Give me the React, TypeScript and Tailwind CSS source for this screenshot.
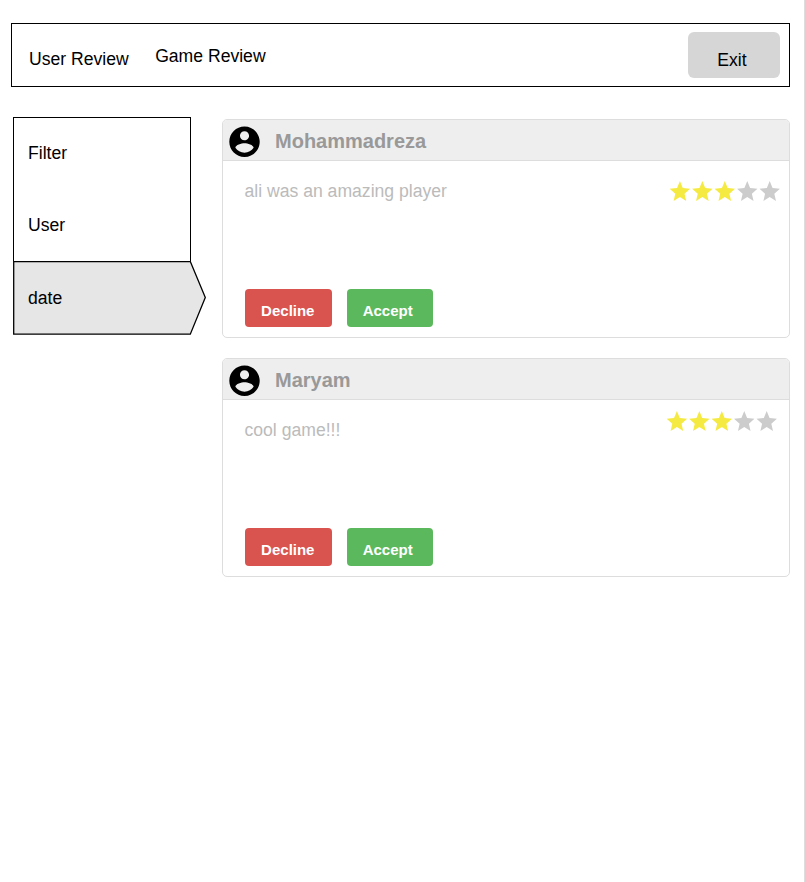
type Review = { name: string; comment: string; rating: number; starsClass: string };

const reviews: Review[] = [
  { name: "Mohammadreza", comment: "ali was an amazing player", rating: 3, starsClass: "mt-[19.5px] mr-[9px]" },
  { name: "Maryam", comment: "cool game!!!", rating: 3, starsClass: "mt-[11px] mr-[12.4px]" },
];

function Avatar() {
  return (
    <svg viewBox="0 0 31 31" className="size-[31px] shrink-0" fill="#000">
      <path
        transform="translate(.3 .6) scale(1.52) translate(-2 -2)"
        d="M12 2C6.48 2 2 6.48 2 12s4.48 10 10 10 10-4.48 10-10S17.52 2 12 2zm0 3c1.66 0 3 1.34 3 3s-1.34 3-3 3-3-1.34-3-3 1.34-3 3-3zm0 14.2c-2.5 0-4.71-1.28-6-3.22.03-1.99 4-3.08 6-3.08 1.99 0 5.97 1.09 6 3.08-1.29 1.94-3.5 3.22-6 3.22z"
      />
    </svg>
  );
}

function Stars({ rating }: { rating: number }) {
  return (
    <svg viewBox="0 0 110 20" className="h-[20px] w-[110px] overflow-visible">
      {[0, 1, 2, 3, 4].map((n) => (
        <path
          key={n}
          transform={`translate(${n * 22.45 - 0.3} 0) scale(1.02 1.055) translate(-2 -2)`}
          fill={n < rating ? "#f5ea42" : "#cccccc"}
          d="M12 17.27L18.18 21l-1.64-7.03L22 9.24l-7.19-.61L12 2 9.19 8.63 2 9.24l5.46 4.73L5.82 21z"
        />
      ))}
    </svg>
  );
}

function ReviewCard({ review }: { review: Review }) {
  return (
    <article className="flex h-[219px] w-[568px] flex-col overflow-hidden rounded-[5px] border border-[#dddddd] bg-white">
      <header className="flex h-[41px] shrink-0 items-start border-b border-[#dddddd] bg-[#eeeeee] pt-[6px] pl-[6px]">
        <Avatar />
        <h2 className="mt-[3px] ml-[15px] text-[20px] leading-[24px] font-bold text-[#999999]">{review.name}</h2>
      </header>
      <div className="flex flex-1 items-start justify-between">
        <p className="mt-[20px] ml-[21.5px] text-[17.6px] leading-[21px] text-[#bbbbbb]">{review.comment}</p>
        <div className={review.starsClass}>
          <Stars rating={review.rating} />
        </div>
      </div>
      <footer className="mb-[10px] ml-[21.6px] flex gap-[15px] text-[15px] leading-[18px] font-bold text-white">
        <button className="h-[37.6px] w-[87.4px] rounded-[4px] bg-[#d9534f] pt-[5px] pr-[1px]">Decline</button>
        <button className="h-[37.6px] w-[86.4px] rounded-[4px] bg-[#5cb85c] pt-[5px] pr-[5px]">Accept</button>
      </footer>
    </article>
  );
}

export default function App() {
  return (
    <div className="h-[882px] w-[805px] border-r border-[#dddddd] bg-white pt-[23px] pl-[11px] font-['Liberation_Sans',Arial,sans-serif] text-[17.6px] leading-[21px] text-black">
      <nav className="flex h-[64px] w-[779px] items-start border border-black">
        <a className="mt-[25px] ml-[17px]">User Review</a>
        <a className="mt-[22px] ml-[26.4px]">Game Review</a>
        <button className="mt-[8px] mr-[9.4px] ml-auto h-[46px] w-[91.4px] rounded-[6px] bg-[#d6d6d6] pt-[10px] pr-[4px]">
          Exit
        </button>
      </nav>
      <main className="flex items-start">
        <aside className="mt-[30px] ml-[2px] w-[193px]">
          <div className="h-[144px] w-[178px] border border-b-0 border-black pl-[14px]">
            <div className="flex h-[70px] items-center">Filter</div>
            <div className="flex h-[74px] items-center">User</div>
          </div>
          <div className="grid h-[74px] items-center">
            <svg viewBox="0 0 193 74" className="col-start-1 row-start-1 h-[74px] w-[193px]">
              <path d="M.7 .5H177.3L192.3 36.5 177.3 73.2H.7z" fill="#e6e6e6" stroke="#000" strokeWidth="1.3" />
            </svg>
            <span className="col-start-1 row-start-1 pl-[15px]">date</span>
          </div>
        </aside>
        <div className="mt-[32px] ml-[16px] flex flex-col gap-[20px]">
          {reviews.map((review) => (
            <ReviewCard key={review.name} review={review} />
          ))}
        </div>
      </main>
    </div>
  );
}
